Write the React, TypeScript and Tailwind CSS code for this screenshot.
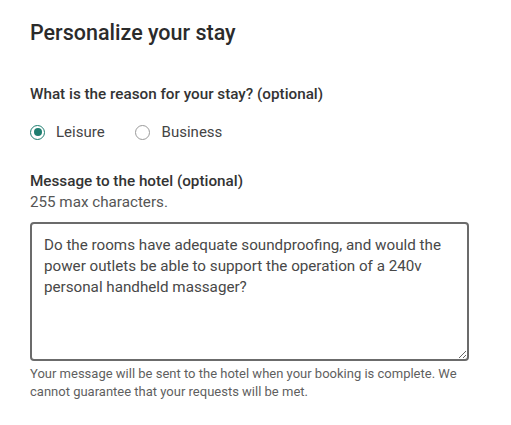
import { useState } from 'react';

export default function App() {
  const [reason, setReason] = useState('leisure');
  const [msg, setMsg] = useState(
    'Do the rooms have adequate soundproofing, and would the power outlets be able to support the operation of a 240v personal handheld massager?'
  );

  return (
    <div className="min-h-screen w-[511px] bg-white pl-[30px] pt-[19px] text-[#333] font-['Roboto',sans-serif]">
      <h2 className="text-[21.5px] font-medium leading-[28px] text-[#2b2b2b]">Personalize your stay</h2>

      <p className="mt-[37px] text-[15.25px] font-medium leading-5 text-[#333]">
        What is the reason for your stay? (optional)
      </p>

      <div className="mt-[18px] flex items-center">
        <label className="flex items-center gap-[11px] cursor-pointer" onClick={() => setReason('leisure')}>
          <span className="flex h-[15px] w-[15px] items-center justify-center rounded-full border-[1.5px] border-[#1e7e70]">
            {reason === 'leisure' && <span className="h-[8px] w-[8px] rounded-full bg-[#1e7e70]" />}
          </span>
          <span className="text-[15px] leading-5 text-[#444]">Leisure</span>
        </label>
        <label className="ml-[30px] flex items-center gap-[12px] cursor-pointer" onClick={() => setReason('business')}>
          <span
            className={
              reason === 'business'
                ? 'flex h-[15px] w-[15px] items-center justify-center rounded-full border-[1.5px] border-[#1e7e70]'
                : 'flex h-[15px] w-[15px] items-center justify-center rounded-full border-[1.5px] border-[#9a9a9a]'
            }
          >
            {reason === 'business' && <span className="h-[8px] w-[8px] rounded-full bg-[#1e7e70]" />}
          </span>
          <span className="text-[15px] leading-5 text-[#444]">Business</span>
        </label>
      </div>

      <p className="mt-[29px] text-[15.25px] font-medium leading-5 text-[#333]">Message to the hotel (optional)</p>
      <p className="mt-[1px] text-[15.2px] leading-5 text-[#555]">255 max characters.</p>

      <textarea
        value={msg}
        onChange={(e) => setMsg(e.target.value)}
        className="mt-[10px] block h-[139px] w-[439px] resize-y rounded-[4px] border-2 border-[#6b6b6b] px-[12px] pt-[11px] pb-[9px] text-[15.2px] leading-[21px] text-[#484848] outline-none font-['Roboto',sans-serif]"
      />

      <p className="mt-[4px] w-[450px] text-[13px] leading-[17.5px] text-[#5f5f5f]">
        Your message will be sent to the hotel when your booking is complete. We cannot guarantee that your requests will be met.
      </p>
    </div>
  );
}
